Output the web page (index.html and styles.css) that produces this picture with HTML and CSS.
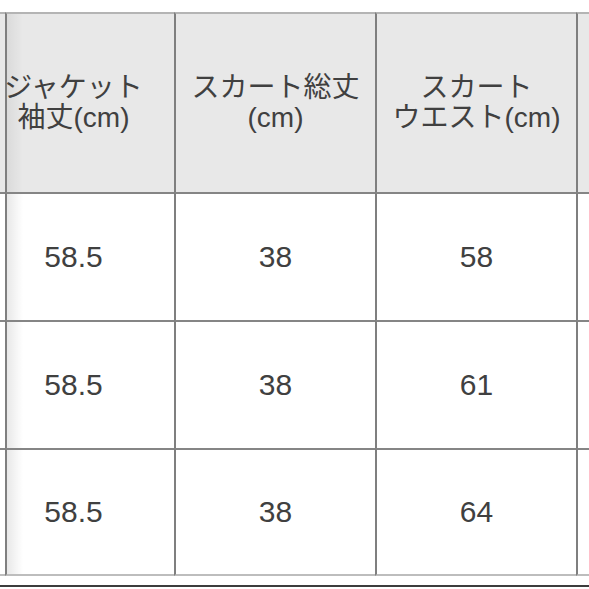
FILE: index.html
```html
<!DOCTYPE html>
<html lang="ja">
<head>
<meta charset="utf-8">
<link rel="stylesheet" href="styles.css">
</head>
<body>
<div class="sheet">
  <div class="grid">
    <div class="cell edge head"></div>
    <div class="cell col1 head"><span class="htext">ジャケット<br>袖丈(cm)</span></div>
    <div class="cell head"><span class="htext">スカート総丈<br>(cm)</span></div>
    <div class="cell head"><span class="htext">スカート<br>ウエスト(cm)</span></div>
    <div class="cell head"></div>

    <div class="cell edge body"></div>
    <div class="cell col1 body"><span class="num">58.5</span></div>
    <div class="cell body"><span class="num">38</span></div>
    <div class="cell body"><span class="num">58</span></div>
    <div class="cell body"></div>

    <div class="cell edge body"></div>
    <div class="cell col1 body"><span class="num">58.5</span></div>
    <div class="cell body"><span class="num">38</span></div>
    <div class="cell body"><span class="num">61</span></div>
    <div class="cell body"></div>

    <div class="cell edge body last"></div>
    <div class="cell col1 body last"><span class="num">58.5</span></div>
    <div class="cell body last"><span class="num">38</span></div>
    <div class="cell body last"><span class="num">64</span></div>
    <div class="cell body last"></div>
  </div>
  <div class="footer-line"></div>
</div>
</body>
</html>
```

FILE: styles.css
```css
html, body {
  margin: 0;
  padding: 0;
  background: #ffffff;
}

.sheet {
  width: 589px;
  height: 589px;
  overflow: hidden;
  padding-top: 12px;
  box-sizing: border-box;
  font-family: "Liberation Sans", "Noto Sans CJK JP", sans-serif;
  color: #404040;
}

.grid {
  display: grid;
  grid-template-columns: 5px 169px 201px 201px 13px;
  grid-template-rows: 180px 128px 128px 128px;
}

.cell {
  box-sizing: border-box;
  border-left: 2px solid #7f7f7f;
  display: flex;
  align-items: center;
  justify-content: center;
  text-align: center;
}

.cell.edge {
  border-left: none;
}

.head {
  background: #e8e8e8;
  border-top: 2px solid #b4b4b4;
}

.body {
  background: #ffffff;
  border-top: 2px solid #858585;
}

.body.last {
  border-bottom: 2px solid #bdbdbd;
}

.col1 {
  padding-right: 34px;
}

.col1.head {
  background: linear-gradient(to right, rgba(0, 0, 0, 0.06), rgba(0, 0, 0, 0) 16px), #e8e8e8;
}

.col1.body {
  background: linear-gradient(to right, rgba(0, 0, 0, 0.09), rgba(0, 0, 0, 0) 16px), #ffffff;
}

.htext {
  font-size: 28px;
  line-height: 30px;
  white-space: nowrap;
}

.num {
  font-size: 30px;
  line-height: 32px;
}

.footer-line {
  margin-top: 9px;
  height: 2px;
  background: #3c3c3c;
}
```
